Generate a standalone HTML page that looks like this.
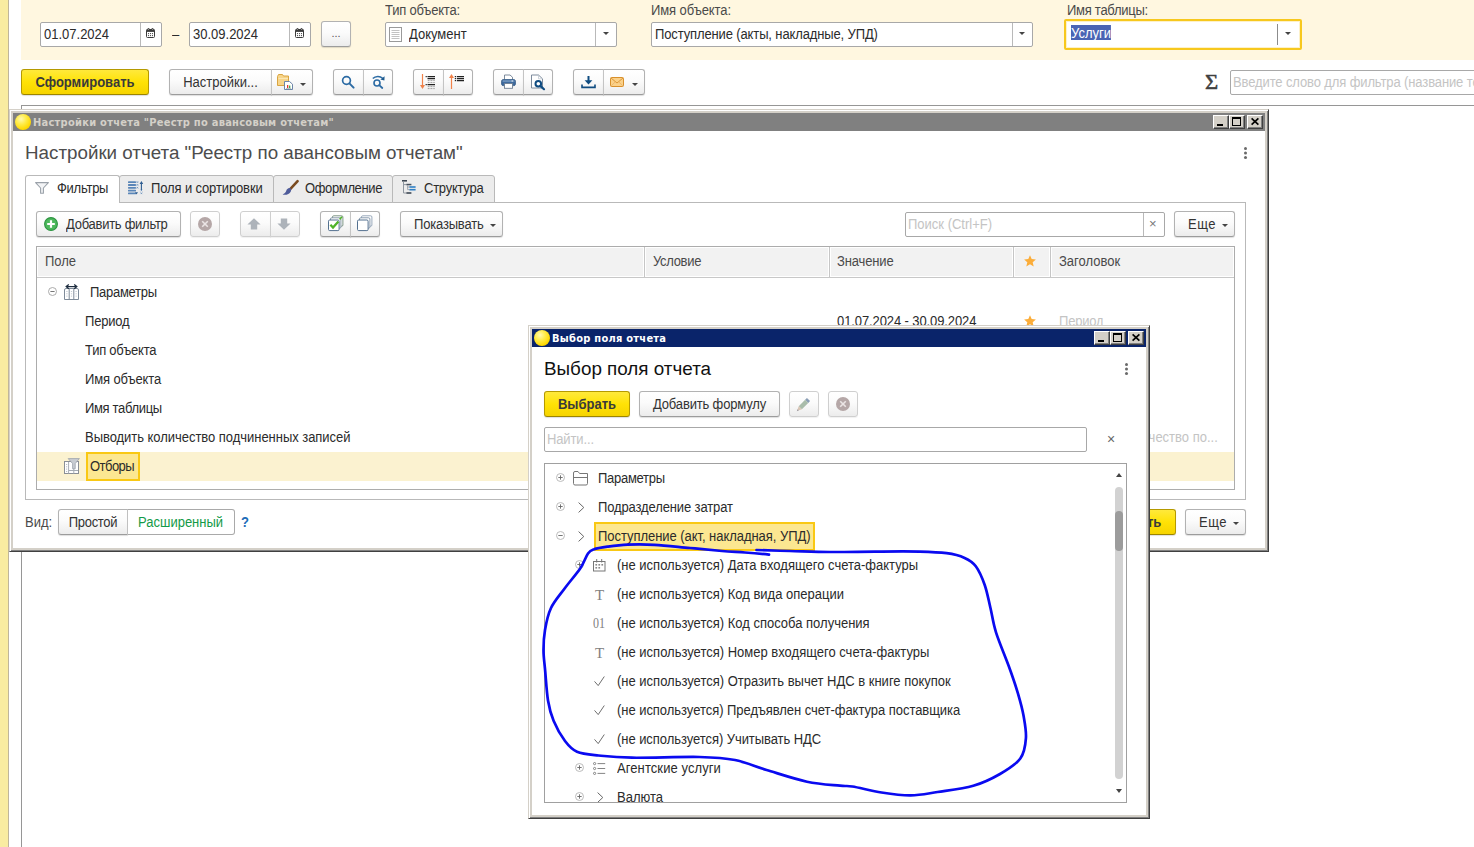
<!DOCTYPE html>
<html lang="ru">
<head>
<meta charset="utf-8">
<title>Настройки отчета</title>
<style>
html,body{margin:0;padding:0;background:#fff}
body{width:1474px;height:847px;overflow:hidden;font-family:"Liberation Sans",sans-serif;font-size:13px;color:#2b2b2b;line-height:1}
#root{position:relative;width:1474px;height:847px;overflow:hidden;background:#fff}
#root *{box-sizing:border-box}
.a{position:absolute}
.t{position:absolute;white-space:nowrap;line-height:16px;height:16px;font-size:14px;transform:scaleX(.9286);transform-origin:0 50%;margin-top:-1px}
.btn{position:absolute;border:1px solid #b2b2b2;border-bottom-color:#9c9c9c;border-radius:3px;background:linear-gradient(#ffffff 0%,#fbfbfb 45%,#ececec 100%);box-shadow:0 1px 1px rgba(0,0,0,.13);text-align:center;white-space:nowrap;color:#333}
.btn.l{border-top-right-radius:0;border-bottom-right-radius:0}
.btn.r{border-top-left-radius:0;border-bottom-left-radius:0;border-left-color:#c4c4c4}
.btn.y{border-color:#b59a00;border-bottom-color:#9c8500;background:linear-gradient(#ffe93c 0%,#ffe206 50%,#f6d400 100%);font-weight:bold;color:#3a3a3a}
.btn span{position:absolute;left:0;right:0;top:50%;margin-top:-8px;line-height:16px;font-size:14px;transform:scaleX(.9286)}
.inp{position:absolute;border:1px solid #a8a8a8;border-radius:2px;background:#fff}
.inp i{position:absolute;top:0;bottom:0;width:1px;background:#b9b9b9}
.car{position:absolute;width:0;height:0;border-left:3.5px solid transparent;border-right:3.5px solid transparent;border-top:3.5px solid #444;margin-top:.5px}
.car.s{border-left-width:3px;border-right-width:3px;border-top-width:3.4px;margin-top:0}
svg{position:absolute;overflow:visible}
.win{position:absolute;background:#fff;border:1px solid;border-color:#d4d0c8 #404040 #404040 #d4d0c8;box-shadow:inset 1px 1px 0 #fff,inset -1px -1px 0 #808080,inset 0 0 0 3px #d4d0c8}
.tb{position:absolute;left:3px;right:3px;top:3px;height:18px}
.tb b{position:absolute;left:20px;top:1px;line-height:17px;font-family:"DejaVu Sans Condensed","DejaVu Sans","Liberation Sans",sans-serif;font-size:11px;letter-spacing:.26px;font-weight:bold;white-space:nowrap}
.ball{position:absolute;left:2px;top:1px;width:16px;height:16px;border-radius:50%;background:radial-gradient(circle at 38% 32%,#fff9b0 0%,#ffec4a 35%,#ffd900 70%,#e9bb00 100%)}
.wb{position:absolute;top:2px;width:16px;height:14px;background:#d4d0c8;border:1px solid;border-color:#fff #404040 #404040 #fff;box-shadow:inset -1px -1px 0 #808080}
.tab{border:1px solid #b9b9b9;border-radius:3px 3px 0 0;background:#ececec}
.tab.on{background:#fff;border-bottom:none;height:28px}
.btn.dis{border-color:#cfcfcf;box-shadow:0 1px 1px rgba(0,0,0,.06)}
.ser{font-family:"Liberation Serif",serif;font-size:15px;color:#808080;transform:none;margin-top:0}
</style>
</head>
<body>
<div id="root">
<!--MAIN-->
<!-- ===== main form ===== -->
<div class="a" style="left:0;top:0;width:8px;height:847px;background:#f9eca1"></div>
<div class="a" style="left:8px;top:0;width:1px;height:847px;background:#bfb59b"></div>
<div class="a" style="left:21px;top:0;width:1453px;height:60px;background:#fff7e0"></div>

<div class="inp" style="left:40px;top:22px;width:122px;height:25px"><i style="left:99px"></i></div>
<div class="t" style="left:44px;top:27px">01.07.2024</div>
<svg style="left:146px;top:28px" width="9" height="10" viewBox="0 0 9 10"><rect x="0.5" y="1.5" width="8" height="8" rx="1" fill="#fff" stroke="#3c3c3c"/><rect x="0.5" y="1.5" width="8" height="2.4" fill="#3c3c3c"/><circle cx="2.5" cy="1" r="1" fill="#3c3c3c"/><circle cx="6.5" cy="1" r="1" fill="#3c3c3c"/><circle cx="2.5" cy="1.3" r=".45" fill="#fff"/><circle cx="6.5" cy="1.3" r=".45" fill="#fff"/><g fill="#3c3c3c"><circle cx="2.5" cy="5.6" r=".6"/><circle cx="4.5" cy="5.6" r=".6"/><circle cx="6.5" cy="5.6" r=".6"/><circle cx="2.5" cy="7.6" r=".6"/><circle cx="4.5" cy="7.6" r=".6"/><circle cx="6.5" cy="7.6" r=".6"/></g></svg>
<div class="t" style="left:172px;top:27px">–</div>
<div class="inp" style="left:189px;top:22px;width:122px;height:25px"><i style="left:99px"></i></div>
<div class="t" style="left:193px;top:27px">30.09.2024</div>
<svg style="left:295px;top:28px" width="9" height="10" viewBox="0 0 9 10"><rect x="0.5" y="1.5" width="8" height="8" rx="1" fill="#fff" stroke="#3c3c3c"/><rect x="0.5" y="1.5" width="8" height="2.4" fill="#3c3c3c"/><circle cx="2.5" cy="1" r="1" fill="#3c3c3c"/><circle cx="6.5" cy="1" r="1" fill="#3c3c3c"/><circle cx="2.5" cy="1.3" r=".45" fill="#fff"/><circle cx="6.5" cy="1.3" r=".45" fill="#fff"/><g fill="#3c3c3c"><circle cx="2.5" cy="5.6" r=".6"/><circle cx="4.5" cy="5.6" r=".6"/><circle cx="6.5" cy="5.6" r=".6"/><circle cx="2.5" cy="7.6" r=".6"/><circle cx="4.5" cy="7.6" r=".6"/><circle cx="6.5" cy="7.6" r=".6"/></g></svg>
<div class="btn" style="left:321px;top:21px;width:30px;height:26px"><span style="font-size:11px;margin-top:-9px;color:#555;transform:none">...</span></div>

<div class="t" style="left:385px;top:3px;color:#4a4a4a;letter-spacing:-0.227px">Тип объекта:</div>
<div class="inp" style="left:385px;top:22px;width:232px;height:25px"><i style="left:209px"></i></div>
<svg style="left:389px;top:27px" width="13" height="15" viewBox="0 0 13 15"><rect x="0.5" y="0.5" width="12" height="14" fill="#fff" stroke="#9a9a9a"/><g stroke="#c2c2c2"><path d="M2.5 3.5h8M2.5 5.5h8M2.5 7.5h8M2.5 9.5h8M2.5 11.5h8"/></g></svg>
<div class="t" style="left:409px;top:27px">Документ</div>
<div class="car s" style="left:602.5px;top:32px"></div>

<div class="t" style="left:651px;top:3px;color:#4a4a4a;letter-spacing:-0.091px">Имя объекта:</div>
<div class="inp" style="left:651px;top:22px;width:382px;height:25px"><i style="left:360px"></i></div>
<div class="t" style="left:655px;top:27px;letter-spacing:-0.136px">Поступление (акты, накладные, УПД)</div>
<div class="car s" style="left:1018.6px;top:32px"></div>

<div class="t" style="left:1067px;top:3px;color:#4a4a4a;letter-spacing:-0.291px">Имя таблицы:</div>
<div class="inp" style="left:1064px;top:19px;width:238px;height:31px;border:2px solid #f7c81e;border-radius:2px;box-shadow:inset 0 0 0 1px #fdf1c9"><i style="left:211px;top:3px;bottom:3px;background:#8c8c8c"></i></div>
<div class="t" style="left:1071px;top:26px;height:15px;line-height:17px;background:#4a64b4;color:#fff">Услуги</div>
<div class="car s" style="left:1285px;top:32px"></div>

<div class="btn y" style="left:21px;top:69px;width:128px;height:26px"><span>Сформировать</span></div>
<div class="btn l" style="left:169px;top:69px;width:103px;height:26px"><span>Настройки...</span></div>
<div class="btn r" style="left:271px;top:69px;width:42px;height:26px"></div>
<div class="btn l" style="left:333px;top:69px;width:31px;height:26px"></div>
<div class="btn r" style="left:363px;top:69px;width:30px;height:26px"></div>
<div class="btn l" style="left:413px;top:69px;width:31px;height:26px"></div>
<div class="btn r" style="left:443px;top:69px;width:30px;height:26px"></div>
<div class="btn l" style="left:493px;top:69px;width:31px;height:26px"></div>
<div class="btn r" style="left:523px;top:69px;width:30px;height:26px"></div>
<div class="btn l" style="left:573px;top:69px;width:31px;height:26px"></div>
<div class="btn r" style="left:603px;top:69px;width:42px;height:26px"></div>
<!--MAINICONS-->
<svg style="left:276px;top:73px" width="18" height="18" viewBox="0 0 18 18"><path d="M1.5 3.5 L2.5 1.5 H6.5 L7.5 3 H12.5 V12.5 H1.5Z" fill="#f7d58a" stroke="#d9a441"/><path d="M2.5 5.5H12" stroke="#fbe7b5"/><path d="M8.5 8.5 H13.5 L16.5 11.2 V16.5 H8.5Z" fill="#fff" stroke="#6d86a8"/><rect x="11" y="12" width="1.3" height="3" fill="#e23b2e"/><rect x="13" y="12.5" width="1.3" height="2.5" fill="#3fae49"/><path d="M10 15.5H15.2" stroke="#9aa" stroke-width=".7"/></svg>
<div class="car" style="left:300px;top:82px;border-left-width:3px;border-right-width:3px;border-top-width:3.5px"></div>
<svg style="left:341px;top:75px" width="14" height="14" viewBox="0 0 14 14"><circle cx="5.5" cy="5.5" r="3.9" fill="none" stroke="#2c6ba4" stroke-width="1.7"/><path d="M8.4 8.4 L12.6 12.6" stroke="#2c6ba4" stroke-width="2" stroke-linecap="round"/></svg>
<svg style="left:371px;top:74px" width="15" height="15" viewBox="0 0 15 15"><circle cx="6" cy="9" r="3" fill="none" stroke="#2c6ba4" stroke-width="1.6"/><path d="M8.2 11.2 L11.3 14" stroke="#2c6ba4" stroke-width="1.8" stroke-linecap="round"/><path d="M1.8 4.6 C4.5 1.8 9 1.8 11.6 4.2" fill="none" stroke="#2c6ba4" stroke-width="1.5"/><path d="M13.6 2.2 L13.4 6.6 L9.4 5.4Z" fill="#1d5a8e"/></svg>
<svg style="left:420px;top:73px" width="17" height="17" viewBox="0 0 17 17"><path d="M2.5 1 V14" stroke="#f0824a" stroke-width="1.2"/><path d="M0 12 L2.5 16 L5 12Z" fill="#f0824a"/><g stroke="#222" stroke-width="1.2"><path d="M7.5 3.6H15M7.5 5.6H15M7.5 11.6H15"/></g><g stroke="#9a9a9a" stroke-width="1"><path d="M9.5 7.6H15M9.5 9.6H15M9.5 13.6H15M9.5 15.6H15" stroke-dasharray="1 .6"/></g><g fill="#222"><rect x="5.6" y="3" width="1.2" height="1.2"/><rect x="5.6" y="11" width="1.2" height="1.2"/></g><g fill="#888"><rect x="7.8" y="7.1" width="1" height="1"/><rect x="7.8" y="9.1" width="1" height="1"/><rect x="7.8" y="13.1" width="1" height="1"/><rect x="7.8" y="15.1" width="1" height="1"/></g></svg>
<svg style="left:449px;top:73px" width="17" height="17" viewBox="0 0 17 17"><path d="M2.5 3 V16" stroke="#f0824a" stroke-width="1.2"/><path d="M0 5 L2.5 1 L5 5Z" fill="#f0824a"/><g stroke="#222" stroke-width="1.2"><path d="M7.8 3.6H15M7.8 5.6H15M7.8 7.6H15"/></g><g fill="#222"><rect x="5.8" y="3" width="1.2" height="1.2"/><rect x="5.8" y="5" width="1.2" height="1.2"/><rect x="5.8" y="7" width="1.2" height="1.2"/></g></svg>
<svg style="left:501px;top:74px" width="15" height="15" viewBox="0 0 15 15"><path d="M3.5 5.5 V1 H9 L11.5 3.2 V5.5" fill="#fff" stroke="#6f7f92" stroke-width=".9"/><rect x="0.6" y="5.6" width="13.8" height="6" rx="1.6" fill="#3f6b9f" stroke="#2f5682" stroke-width=".8"/><rect x="1.6" y="6.4" width="11.8" height="1.3" fill="#7fa1c7"/><rect x="3.5" y="9.5" width="8" height="4.8" fill="#fff" stroke="#6f7f92" stroke-width=".9"/><rect x="10.6" y="6.5" width="1.3" height="1" fill="#fff"/></svg>
<svg style="left:530px;top:74px" width="16" height="16" viewBox="0 0 16 16"><path d="M1.5 1 H8.5 L12.5 4.8 V14 H1.5Z" fill="#fff" stroke="#6f7f92" stroke-width=".9"/><path d="M8.5 1 V4.8 H12.5" fill="none" stroke="#b8c2cc" stroke-width=".7"/><circle cx="8.3" cy="9.8" r="2.8" fill="#fff" stroke="#0f4c81" stroke-width="2"/><path d="M10.6 12.1 L14 15.2" stroke="#0f4c81" stroke-width="2.2" stroke-linecap="round"/></svg>
<svg style="left:581px;top:75px" width="15" height="14" viewBox="0 0 15 14"><path d="M7.5 1 V8" stroke="#0f4c81" stroke-width="2"/><path d="M3.6 5.2 H11.4 L7.5 9.6Z" fill="#0f4c81"/><path d="M1 9.6 V12.4 H14 V9.6" fill="none" stroke="#0f4c81" stroke-width="1.6"/></svg>
<svg style="left:610px;top:77px" width="14" height="10" viewBox="0 0 14 10"><rect x="0.5" y="0.5" width="13" height="9" rx="1" fill="#fbd189" stroke="#d8902c"/><path d="M1 1 L7 6 L13 1" fill="none" stroke="#d8902c" stroke-width=".9"/><path d="M1 9 L5.3 4.8 M13 9 L8.7 4.8" stroke="#e8b266" stroke-width=".8"/></svg>
<div class="car" style="left:632px;top:82px;border-left-width:3px;border-right-width:3px;border-top-width:3.5px"></div>
<div class="t" style="left:1205px;top:71px;font-family:'Liberation Serif',serif;font-size:21px;line-height:22px;height:22px;color:#404040;-webkit-text-stroke:.5px #404040;transform:scaleX(1.08);transform-origin:0 0;margin-top:0">Σ</div>
<div class="inp" style="left:1230px;top:70px;width:260px;height:25px"></div>
<div class="t" style="left:1233px;top:75px;color:#c4c4c4;letter-spacing:-0.126px">Введите слово для фильтра (название товара)</div>

<div class="a" style="left:21px;top:105px;width:1453px;height:1px;background:#969696"></div>
<div class="a" style="left:21px;top:105px;width:1px;height:742px;background:#969696"></div>
<!--OUTER-->
<!-- ===== outer window: report settings ===== -->
<div class="win" style="left:9px;top:109px;width:1260px;height:443px">
 <div class="tb" style="background:#808080"><div class="ball"></div><b style="color:#d4d0c8">Настройки отчета "Реестр по авансовым отчетам"</b>
  <div class="wb" style="right:36px"><svg width="16" height="14" style="left:-1px;top:-1px" shape-rendering="crispEdges"><rect x="4" y="9" width="6" height="2" fill="#000"/></svg></div><div class="wb" style="right:20px"><svg width="16" height="14" style="left:-1px;top:-1px" shape-rendering="crispEdges"><path d="M3 2h9v9h-9z M4 4v6h7v-6z" fill="#000" fill-rule="evenodd"/></svg></div><div class="wb" style="right:2px"><svg width="16" height="14" style="left:-1px;top:-1px"><path d="M4.6 3.4 L11.4 9.6 M11.4 3.4 L4.6 9.6" stroke="#000" stroke-width="1.7" shape-rendering="geometricPrecision"/></svg></div>
 </div>
</div>
<div class="t" style="left:25px;top:142px;font-size:18.8px;line-height:22px;height:22px;color:#4d4d4d;transform:none;margin-top:0">Настройки отчета "Реестр по авансовым отчетам"</div>
<div class="a" style="left:1244px;top:147px;width:3px;height:3px;border-radius:50%;background:#6a6a6a;box-shadow:0 4.5px 0 #6a6a6a,0 9px 0 #6a6a6a"></div>

<!-- tabs -->
<div class="a" style="left:25px;top:202px;width:1221px;height:298px;border:1px solid #b9b9b9"></div>
<div class="a tab" style="left:119px;top:175px;width:155px;height:28px"></div>
<div class="a tab" style="left:273px;top:175px;width:120px;height:28px"></div>
<div class="a tab" style="left:392px;top:175px;width:103px;height:28px"></div>
<div class="a tab on" style="left:25px;top:175px;width:95px;height:28px"></div>
<div class="t" style="left:57px;top:181px;letter-spacing:-0.283px">Фильтры</div>
<div class="t" style="left:151px;top:181px;letter-spacing:-0.138px">Поля и сортировки</div>
<div class="t" style="left:305px;top:181px;letter-spacing:-0.389px">Оформление</div>
<div class="t" style="left:424px;top:181px;letter-spacing:-0.275px">Структура</div>
<!--TABICONS-->
<svg style="left:35px;top:182px" width="14" height="12" viewBox="0 0 14 12"><path d="M0.6 0.6 H13.4 L8.4 6 V11.2 H5.6 V6Z" fill="#f3f4f6" stroke="#9aa1a9" stroke-width="1.1" stroke-linejoin="round"/></svg>
<svg style="left:128px;top:181px" width="16" height="14" viewBox="0 0 16 14"><g fill="#5a86b8"><rect x="0" y="0.3" width="8" height="1.8" rx=".6"/><rect x="0" y="3.1" width="8" height="1.8" rx=".6"/><rect x="0" y="5.9" width="8" height="1.8" rx=".6"/><rect x="0" y="8.7" width="8" height="1.8" rx=".6"/><rect x="0" y="11.5" width="8" height="1.8" rx=".6"/></g><path d="M7 11.2 L10 11.2 L8.5 13.6Z" fill="#2d5d91"/><g stroke="#5a86b8" stroke-width=".7"><path d="M8.6 .3l1.6 1.6m0-1.6l-1.6 1.6M8.6 3.1l1.6 1.6m0-1.6l-1.6 1.6M8.6 5.9l1.6 1.6m0-1.6l-1.6 1.6"/><path d="M12.6 8.7l1.6 1.6m0-1.6l-1.6 1.6M12.6 11.5l1.6 1.6m0-1.6l-1.6 1.6"/></g><path d="M13.4 2 V9" stroke="#2d5d91" stroke-width="1.1"/><path d="M11.6 3 L13.4 0 L15.2 3Z" fill="#2d5d91"/></svg>
<svg style="left:282px;top:180px" width="17" height="16" viewBox="0 0 17 16"><path d="M15.6 1.2 L8.2 9.2" stroke="#7a4a1e" stroke-width="2.6" stroke-linecap="round"/><path d="M8.6 8.2 C6.5 7.4 4.6 9 4.2 11 C3.8 12.6 2.4 13.6 0.6 14.6 C4 15.4 7.6 14 8.8 11.4 C9.3 10.2 9.4 9 8.6 8.2Z" fill="#4e5b9a"/></svg>
<svg style="left:402px;top:180px" width="14" height="14" viewBox="0 0 14 14"><rect x="0" y="0" width="5" height="1.6" fill="#3c4652"/><path d="M1.5 1.6 V13 H4.5 M1.5 4.6 H4.5" fill="none" stroke="#8e969f" stroke-width="1"/><rect x="4.4" y="3.8" width="5" height="1.5" fill="#46515e"/><path d="M5.6 5.3 V9.6 M5.6 7 H7.4 M5.6 9.6 H7.4" fill="none" stroke="#8e969f" stroke-width=".8"/><rect x="7.4" y="6.2" width="6.2" height="1.6" fill="#2f7fc4"/><rect x="7.4" y="8.9" width="6.2" height="1.6" fill="#2f7fc4"/><rect x="4.4" y="12.2" width="5" height="1.6" fill="#3c4652"/></svg>

<!-- toolbar -->
<div class="btn" style="left:36px;top:211px;width:145px;height:26px"></div>
<div class="t" style="left:66px;top:217px;color:#333;letter-spacing:-0.286px">Добавить фильтр</div>
<div class="btn dis" style="left:190px;top:211px;width:30px;height:26px"></div>
<div class="btn l dis" style="left:240px;top:211px;width:31px;height:26px"></div>
<div class="btn r dis" style="left:270px;top:211px;width:30px;height:26px"></div>
<div class="btn l" style="left:320px;top:211px;width:31px;height:26px"></div>
<div class="btn r" style="left:350px;top:211px;width:30px;height:26px"></div>
<div class="btn" style="left:400px;top:211px;width:103px;height:26px"></div>
<div class="t" style="left:414px;top:217px;color:#333;letter-spacing:-.2px">Показывать</div>
<div class="car" style="left:490px;top:223px"></div>
<div class="inp" style="left:905px;top:212px;width:260px;height:25px"><i style="left:237px"></i></div>
<div class="t" style="left:908px;top:217px;color:#c4c4c4">Поиск (Ctrl+F)</div>
<div class="t" style="left:1149px;top:216px;color:#777;font-size:13px;transform:none;margin-top:0">×</div>
<div class="btn" style="left:1174px;top:211px;width:61px;height:26px"></div>
<div class="t" style="left:1188px;top:217px;color:#333;letter-spacing:.5px">Еще</div>
<div class="car" style="left:1222px;top:223px"></div>
<!--TBICONS-->
<svg style="left:44px;top:217px" width="14" height="14" viewBox="0 0 14 14"><circle cx="7" cy="7" r="6.4" fill="#4db85c" stroke="#2c9440" stroke-width="1.1"/><path d="M7 3.2 V10.8 M3.2 7 H10.8" stroke="#fff" stroke-width="2.2"/></svg>
<svg style="left:198px;top:217px" width="14" height="14" viewBox="0 0 14 14"><circle cx="7" cy="7" r="7" fill="#b5a7a7"/><path d="M4.2 4.2 L9.8 9.8 M9.8 4.2 L4.2 9.8" stroke="#ebe5e5" stroke-width="1.6"/></svg>
<svg style="left:247px;top:218px" width="14" height="12" viewBox="0 0 14 12"><path d="M7 0.3 L13.6 6.6 H10.2 V11.6 H3.8 V6.6 H0.4Z" fill="#adb3ba"/></svg>
<svg style="left:277px;top:218px" width="14" height="12" viewBox="0 0 14 12"><path d="M7 11.7 L13.6 5.4 H10.2 V0.4 H3.8 V5.4 H0.4Z" fill="#adb3ba"/></svg>
<svg style="left:328px;top:215px" width="16" height="17" viewBox="0 0 16 17"><rect x="4.5" y="0.8" width="10.4" height="10.4" rx="1.2" fill="#fff" stroke="#6f8a78" stroke-width=".9"/><rect x="2.5" y="2.8" width="10.4" height="10.4" rx="1.2" fill="#fff" stroke="#7a8ea0" stroke-width=".9"/><rect x="0.5" y="5" width="10.6" height="10.6" rx="1.2" fill="#fff" stroke="#53708f" stroke-width="1"/><path d="M2.4 9.8 L5 12.6 L10.4 6.6" fill="none" stroke="#4fb32a" stroke-width="2.3"/><path d="M11.6 4.4 L14 1.8" stroke="#4fb32a" stroke-width="1.6"/></svg>
<svg style="left:357px;top:215px" width="16" height="17" viewBox="0 0 16 17"><rect x="4.5" y="0.8" width="10.4" height="10.4" rx="1.2" fill="#fff" stroke="#8d9fb3" stroke-width=".9"/><rect x="2.5" y="2.8" width="10.4" height="10.4" rx="1.2" fill="#fff" stroke="#7a8ea5" stroke-width=".9"/><rect x="0.5" y="5" width="10.6" height="10.6" rx="1.2" fill="#fff" stroke="#53708f" stroke-width="1"/></svg>

<!-- table -->
<div class="a" style="left:36px;top:246px;width:1199px;height:244px;border:1px solid #acacac;background:#fff"></div>
<div class="a" style="left:38px;top:248px;width:605px;height:28px;background:#f2f2f2"></div>
<div class="a" style="left:646px;top:248px;width:182px;height:28px;background:#f2f2f2"></div>
<div class="a" style="left:831px;top:248px;width:181px;height:28px;background:#f2f2f2"></div>
<div class="a" style="left:1015px;top:248px;width:34px;height:28px;background:#f2f2f2"></div>
<div class="a" style="left:1052px;top:248px;width:181px;height:28px;background:#f2f2f2"></div>
<div class="a" style="left:644px;top:247px;width:1px;height:30px;background:#c6c6c6"></div>
<div class="a" style="left:829px;top:247px;width:1px;height:30px;background:#c6c6c6"></div>
<div class="a" style="left:1013px;top:247px;width:1px;height:30px;background:#c6c6c6"></div>
<div class="a" style="left:1050px;top:247px;width:1px;height:30px;background:#c6c6c6"></div>
<div class="a" style="left:37px;top:277px;width:1197px;height:1px;background:#c8c8c8"></div>
<div class="t" style="left:45px;top:254px;color:#4a4a4a">Поле</div>
<div class="t" style="left:653px;top:254px;color:#4a4a4a;letter-spacing:-0.333px">Условие</div>
<div class="t" style="left:837px;top:254px;color:#4a4a4a;letter-spacing:-0.143px">Значение</div>
<div class="t" style="left:1059px;top:254px;color:#4a4a4a">Заголовок</div>
<div class="a" style="left:37px;top:452px;width:1197px;height:29px;background:#fbf2d0"></div>
<div class="a" style="left:86px;top:452px;width:54px;height:29px;background:#fce791;border:2px solid #f9c814"></div>
<div class="t" style="left:90px;top:285px;letter-spacing:-0.300px">Параметры</div>
<div class="t" style="left:85px;top:314px;letter-spacing:-0.200px">Период</div>
<div class="t" style="left:85px;top:343px;letter-spacing:-0.250px">Тип объекта</div>
<div class="t" style="left:85px;top:372px;letter-spacing:-0.140px">Имя объекта</div>
<div class="t" style="left:85px;top:401px;letter-spacing:-0.360px">Имя таблицы</div>
<div class="t" style="left:85px;top:430px;letter-spacing:-.04px">Выводить количество подчиненных записей</div>
<div class="t" style="left:90px;top:459px;letter-spacing:-0.580px">Отборы</div>
<div class="t" style="left:837px;top:314px;letter-spacing:-0.109px">01.07.2024 - 30.09.2024</div>
<div class="t" style="left:1059px;top:314px;color:#c4c4c4;letter-spacing:-0.200px">Период</div>
<div class="t" style="left:1100px;top:430px;width:118px;overflow:hidden;color:#c4c4c4;direction:rtl;text-align:right;transform-origin:100% 50%"><span style="direction:ltr;unicode-bidi:bidi-override">Выводить количество по...</span></div>
<!--TREEICONS-->
<svg style="left:48px;top:287px" width="9" height="9" viewBox="0 0 9 9"><circle cx="4.5" cy="4.5" r="4" fill="#fff" stroke="#a2a2a2" stroke-width=".9"/><path d="M2.4 4.5 H6.6" stroke="#777" stroke-width="1"/></svg>
<svg style="left:64px;top:284px" width="15" height="16" viewBox="0 0 15 16"><path d="M0.5 6 Q0.5 4.5 2 4.5 H13 Q14.5 4.5 14.5 6 V15.5 H0.5Z" fill="#fff" stroke="#7f8b99"/><path d="M5.2 5 V15.5 M9.8 5 V15.5" stroke="#7f8b99"/><g fill="#c3c9d0"><rect x="2.3" y="7" width="1.2" height="1"/><rect x="2.3" y="9.3" width="1.2" height="1"/><rect x="2.3" y="11.6" width="1.2" height="1"/><rect x="6.9" y="7" width="1.2" height="1"/><rect x="6.9" y="9.3" width="1.2" height="1"/><rect x="6.9" y="11.6" width="1.2" height="1"/><rect x="11.5" y="7" width="1.2" height="1"/><rect x="11.5" y="9.3" width="1.2" height="1"/><rect x="11.5" y="11.6" width="1.2" height="1"/></g><path d="M2.6 2.6 H12.4" stroke="#1f2e40" stroke-width="1.2"/><path d="M4.8 0.4 L2.2 2.6 L4.8 4.8 M10.2 0.4 L12.8 2.6 L10.2 4.8" fill="none" stroke="#1f2e40" stroke-width="1.3"/></svg>
<svg style="left:64px;top:458px" width="16" height="16" viewBox="0 0 16 16"><rect x="0.5" y="3.5" width="14" height="12" fill="#fff" stroke="#8a8f96"/><path d="M4.6 4 V15.5 M9.8 9 V15.5 M5 12.5 H14" stroke="#a7adb4"/><g fill="#b9bfc6"><rect x="2" y="6" width="1.2" height="1"/><rect x="2" y="8.3" width="1.2" height="1"/><rect x="2" y="10.6" width="1.2" height="1"/><rect x="2" y="13" width="1.2" height="1"/></g><path d="M4.2 0.6 H15.4 L11.2 5.6 V10.8 H8.6 V5.6Z" fill="#c9cdd2" stroke="#9aa1a9" stroke-width=".8" stroke-linejoin="round"/></svg>
<svg style="left:1024px;top:255px" width="12" height="12" viewBox="0 0 12 12"><path d="M6 0.2 L7.7 4.1 L11.9 4.5 L8.7 7.3 L9.7 11.4 L6 9.2 L2.3 11.4 L3.3 7.3 L0.1 4.5 L4.3 4.1Z" fill="#fbad3a"/></svg>
<svg style="left:1024px;top:315px" width="12" height="12" viewBox="0 0 12 12"><path d="M6 0.2 L7.7 4.1 L11.9 4.5 L8.7 7.3 L9.7 11.4 L6 9.2 L2.3 11.4 L3.3 7.3 L0.1 4.5 L4.3 4.1Z" fill="#fbad3a"/></svg>

<!-- bottom -->
<div class="t" style="left:25px;top:515px;color:#4a4a4a">Вид:</div>
<div class="btn l" style="left:58px;top:509px;width:70px;height:26px"><span style="letter-spacing:-0.317px">Простой</span></div>
<div class="a" style="left:127px;top:509px;width:108px;height:26px;border:1px solid #a9a9a9;border-left-color:#c0c0c0;border-radius:0 3px 3px 0;background:#fff"></div>
<div class="t" style="left:138px;top:515px;color:#149a48">Расширенный</div>
<div class="t" style="left:241px;top:515px;color:#1d6cb8;font-weight:bold;-webkit-text-stroke:0">?</div>
<div class="btn y" style="left:1076px;top:509px;width:100px;height:26px"></div>
<div class="t" style="left:1147px;top:515px;font-weight:bold;color:#3a3a3a">ть</div>
<div class="btn" style="left:1185px;top:509px;width:61px;height:26px"></div>
<div class="t" style="left:1199px;top:515px;color:#333;letter-spacing:.5px">Еще</div>
<div class="car" style="left:1233px;top:521px"></div>
<!--INNER-->
<!-- ===== inner window: field chooser ===== -->
<div class="win" style="left:528px;top:325px;width:622px;height:494px">
 <div class="tb" style="background:#0a246a"><div class="ball"></div><b style="color:#fff">Выбор поля отчета</b>
  <div class="wb" style="right:36px"><svg width="16" height="14" style="left:-1px;top:-1px" shape-rendering="crispEdges"><rect x="4" y="9" width="6" height="2" fill="#000"/></svg></div><div class="wb" style="right:20px"><svg width="16" height="14" style="left:-1px;top:-1px" shape-rendering="crispEdges"><path d="M3 2h9v9h-9z M4 4v6h7v-6z" fill="#000" fill-rule="evenodd"/></svg></div><div class="wb" style="right:2px"><svg width="16" height="14" style="left:-1px;top:-1px"><path d="M4.6 3.4 L11.4 9.6 M11.4 3.4 L4.6 9.6" stroke="#000" stroke-width="1.7" shape-rendering="geometricPrecision"/></svg></div>
 </div>
</div>
<div class="t" style="left:544px;top:358px;font-size:18.85px;line-height:22px;height:22px;color:#111;transform:none;margin-top:0">Выбор поля отчета</div>
<div class="a" style="left:1125px;top:363px;width:3px;height:3px;border-radius:50%;background:#6a6a6a;box-shadow:0 4.5px 0 #6a6a6a,0 9px 0 #6a6a6a"></div>
<div class="btn y" style="left:544px;top:391px;width:86px;height:26px"><span>Выбрать</span></div>
<div class="btn" style="left:639px;top:391px;width:141px;height:26px"><span style="letter-spacing:-0.173px">Добавить формулу</span></div>
<div class="btn dis" style="left:789px;top:391px;width:30px;height:26px"></div>
<div class="btn dis" style="left:828px;top:391px;width:30px;height:26px"></div>
<!--INICONS-->
<svg style="left:795px;top:398px" width="15" height="15" viewBox="0 0 15 15"><g transform="rotate(45 7.5 7.5)"><rect x="5.3" y="-1" width="4.4" height="2.6" fill="#8a9db5"/><rect x="5.3" y="1.6" width="4.4" height="9" fill="#a9bcaa"/><path d="M5.3 10.6 H9.7 L7.5 15.4Z" fill="#d8c5b5"/><path d="M6.7 13.6 H8.3 L7.5 15.6Z" fill="#9a9aa2"/></g></svg>
<svg style="left:836px;top:397px" width="14" height="14" viewBox="0 0 14 14"><circle cx="7" cy="7" r="7" fill="#b5a7a7"/><path d="M4.2 4.2 L9.8 9.8 M9.8 4.2 L4.2 9.8" stroke="#ebe5e5" stroke-width="1.6"/></svg>
<div class="inp" style="left:544px;top:427px;width:543px;height:25px"></div>
<div class="t" style="left:547px;top:432px;color:#c4c4c4;letter-spacing:-0.143px">Найти...</div>
<div class="t" style="left:1107px;top:431px;color:#666;font-size:14px;transform:none;margin-top:0">×</div>

<div class="a" style="left:544px;top:463px;width:583px;height:340px;border:1px solid #a0a0a0;background:#fff;overflow:hidden">
 <div class="a" style="left:49px;top:58px;width:221px;height:29px;background:#fce791;border:2px solid #f9c814"></div>
 <div class="t" style="left:53px;top:7px;letter-spacing:-0.300px">Параметры</div>
 <div class="t" style="left:53px;top:36px;letter-spacing:-0.137px">Подразделение затрат</div>
 <div class="t" style="left:53px;top:65px;letter-spacing:-0.050px">Поступление (акт, накладная, УПД)</div>
 <div class="t" style="left:72px;top:94px">(не используется) Дата входящего счета-фактуры</div>
 <div class="t" style="left:72px;top:123px">(не используется) Код вида операции</div>
 <div class="t" style="left:72px;top:152px">(не используется) Код способа получения</div>
 <div class="t" style="left:72px;top:181px">(не используется) Номер входящего счета-фактуры</div>
 <div class="t" style="left:72px;top:210px">(не используется) Отразить вычет НДС в книге покупок</div>
 <div class="t" style="left:72px;top:239px;letter-spacing:-.043px">(не используется) Предъявлен счет-фактура поставщика</div>
 <div class="t" style="left:72px;top:268px;letter-spacing:-0.060px">(не используется) Учитывать НДС</div>
 <div class="t" style="left:72px;top:297px;letter-spacing:0.093px">Агентские услуги</div>
 <div class="t" style="left:72px;top:326px">Валюта</div>
 <div class="t ser" style="left:50px;top:123px">T</div>
 <div class="t ser" style="left:48px;top:151px;transform:scaleX(.8);transform-origin:0 0">01</div>
 <div class="t ser" style="left:50px;top:181px">T</div>
 <!--INTREEICONS-->
 <svg style="left:11px;top:9px" width="9" height="9" viewBox="0 0 9 9"><circle cx="4.5" cy="4.5" r="4" fill="#fff" stroke="#b4b4b4" stroke-width=".9"/><path d="M2.3 4.5 H6.7 M4.5 2.3 V6.7" stroke="#666" stroke-width=".9"/></svg>
 <svg style="left:11px;top:38px" width="9" height="9" viewBox="0 0 9 9"><circle cx="4.5" cy="4.5" r="4" fill="#fff" stroke="#b4b4b4" stroke-width=".9"/><path d="M2.3 4.5 H6.7 M4.5 2.3 V6.7" stroke="#666" stroke-width=".9"/></svg>
 <svg style="left:11px;top:67px" width="9" height="9" viewBox="0 0 9 9"><circle cx="4.5" cy="4.5" r="4" fill="#fff" stroke="#b4b4b4" stroke-width=".9"/><path d="M2.3 4.5 H6.7" stroke="#666" stroke-width=".9"/></svg>
 <svg style="left:30px;top:96px" width="9" height="9" viewBox="0 0 9 9"><circle cx="4.5" cy="4.5" r="4" fill="#fff" stroke="#b4b4b4" stroke-width=".9"/><path d="M2.3 4.5 H6.7 M4.5 2.3 V6.7" stroke="#666" stroke-width=".9"/></svg>
 <svg style="left:30px;top:299px" width="9" height="9" viewBox="0 0 9 9"><circle cx="4.5" cy="4.5" r="4" fill="#fff" stroke="#b4b4b4" stroke-width=".9"/><path d="M2.3 4.5 H6.7 M4.5 2.3 V6.7" stroke="#666" stroke-width=".9"/></svg>
 <svg style="left:30px;top:328px" width="9" height="9" viewBox="0 0 9 9"><circle cx="4.5" cy="4.5" r="4" fill="#fff" stroke="#b4b4b4" stroke-width=".9"/><path d="M2.3 4.5 H6.7 M4.5 2.3 V6.7" stroke="#666" stroke-width=".9"/></svg>
 <svg style="left:28px;top:7px" width="15" height="15" viewBox="0 0 15 15"><path d="M0.5 2 Q0.5 0.5 2 0.5 H5 L6.6 2.5 H14.5 V12.5 Q14.5 14 13 14 H2 Q0.5 14 0.5 12.5Z M0.5 6.5 H14.5" fill="none" stroke="#777" stroke-width="1"/></svg>
 <svg style="left:33px;top:38px" width="7" height="11" viewBox="0 0 7 11"><path d="M0.6 0.6 L5.8 5.5 L0.6 10.4" fill="none" stroke="#666" stroke-width="1"/></svg>
 <svg style="left:33px;top:67px" width="7" height="11" viewBox="0 0 7 11"><path d="M0.6 0.6 L5.8 5.5 L0.6 10.4" fill="none" stroke="#666" stroke-width="1"/></svg>
 <svg style="left:52px;top:328px" width="7" height="11" viewBox="0 0 7 11"><path d="M0.6 0.6 L5.8 5.5 L0.6 10.4" fill="none" stroke="#666" stroke-width="1"/></svg>
 <svg style="left:48px;top:95px" width="13" height="13" viewBox="0 0 13 13"><rect x="0.5" y="2.5" width="11.5" height="9.5" fill="none" stroke="#777"/><path d="M3.7 0 V3.5 M8.7 0 V3.5" stroke="#777" stroke-width="1"/><g fill="#888"><rect x="2.4" y="5" width="1.7" height="1.6"/><rect x="5.4" y="5" width="1.7" height="1.6"/><rect x="8.4" y="5" width="1.7" height="1.6"/><rect x="2.4" y="8" width="1.7" height="1.6"/><rect x="5.4" y="8" width="1.7" height="1.6"/></g></svg>
 <svg style="left:49px;top:212px" width="12" height="11" viewBox="0 0 12 11"><path d="M0.5 5.4 L4.2 9.6 L10.3 0.5" fill="none" stroke="#6e6e6e" stroke-width="1"/></svg>
 <svg style="left:49px;top:241px" width="12" height="11" viewBox="0 0 12 11"><path d="M0.5 5.4 L4.2 9.6 L10.3 0.5" fill="none" stroke="#6e6e6e" stroke-width="1"/></svg>
 <svg style="left:49px;top:270px" width="12" height="11" viewBox="0 0 12 11"><path d="M0.5 5.4 L4.2 9.6 L10.3 0.5" fill="none" stroke="#6e6e6e" stroke-width="1"/></svg>
 <svg style="left:48px;top:298px" width="13" height="13" viewBox="0 0 13 13"><g fill="none" stroke="#777" stroke-width=".9"><circle cx="1.6" cy="1.6" r="1.1"/><circle cx="1.6" cy="6.5" r="1.1"/><circle cx="1.6" cy="11.4" r="1.1"/><path d="M4.5 1.6 H12.2 M4.5 6.5 H12.2 M4.5 11.4 H12.2"/></g></svg>
 <div class="a" style="left:570px;top:23px;width:8px;height:292px;border-radius:4px;background:#d2d2d2"></div>
 <div class="a" style="left:570px;top:47px;width:8px;height:40px;border-radius:4px;background:#9c9c9c"></div>
 <div class="a" style="left:571px;top:9px;width:0;height:0;border-left:3px solid transparent;border-right:3px solid transparent;border-bottom:4px solid #444"></div>
 <div class="a" style="left:571px;top:325px;width:0;height:0;border-left:3px solid transparent;border-right:3px solid transparent;border-top:4px solid #444"></div>
</div>
<svg style="left:0;top:0" width="1474" height="847" viewBox="0 0 1474 847"><path d="M769.0 554.6 C765.0 554.2 752.8 553.1 745.0 552.5 C737.2 551.9 731.2 551.8 722.0 551.0 C712.8 550.2 701.2 549.0 690.0 548.0 C678.8 547.0 664.9 545.4 654.5 544.8 C644.1 544.2 635.4 544.3 627.6 544.6 C619.9 544.9 613.6 545.8 608.0 546.6 C602.4 547.4 597.3 548.1 594.0 549.3 C590.7 550.4 590.2 550.4 588.0 553.5 C585.8 556.6 584.3 562.2 580.5 568.0 C576.7 573.8 569.9 581.3 565.0 588.0 C560.1 594.7 554.3 601.0 551.0 608.0 C547.7 615.0 546.2 623.0 545.0 630.0 C543.8 637.0 543.5 643.5 543.5 650.0 C543.5 656.5 544.2 660.6 545.0 669.0 C545.8 677.4 546.6 691.9 548.0 700.5 C549.4 709.1 550.8 714.0 553.6 720.7 C556.4 727.5 561.1 735.8 565.0 741.0 C568.9 746.2 571.4 749.3 577.0 751.7 C582.6 754.1 589.3 754.5 598.5 755.5 C607.7 756.5 615.2 757.5 632.0 757.7 C648.8 758.0 682.2 756.6 699.4 757.0 C716.6 757.4 723.8 757.8 735.0 760.0 C746.2 762.2 754.6 766.4 766.6 770.0 C778.6 773.6 794.8 779.1 807.0 781.7 C819.2 784.3 832.4 784.9 840.0 785.7 C847.6 786.5 845.5 785.4 852.4 786.5 C859.3 787.6 871.8 791.0 881.5 792.5 C891.2 794.0 901.3 795.5 910.6 795.4 C919.9 795.3 927.0 793.6 937.5 792.0 C948.0 790.4 962.9 788.8 973.3 785.8 C983.7 782.8 992.2 778.5 1000.0 774.0 C1007.8 769.5 1016.0 764.4 1020.3 758.5 C1024.6 752.6 1025.4 745.5 1025.9 738.4 C1026.5 731.3 1024.9 723.5 1023.6 716.0 C1022.3 708.5 1020.4 701.8 1018.0 693.6 C1015.6 685.4 1012.7 676.9 1009.0 666.7 C1005.3 656.5 999.1 642.1 996.0 632.3 C992.9 622.5 992.3 615.6 990.4 607.7 C988.5 599.9 987.2 592.1 984.8 585.2 C982.4 578.3 979.2 570.8 975.8 566.2 C972.4 561.7 969.5 560.1 964.6 557.9 C959.7 555.7 954.1 554.2 946.6 553.2 C939.1 552.2 931.7 551.9 919.7 551.6 C907.8 551.3 889.9 551.5 874.9 551.6 C859.9 551.7 844.1 552.1 830.0 552.0 C815.9 551.9 802.2 551.3 790.0 551.0 C777.8 550.7 762.1 550.2 756.5 550.0" fill="none" stroke="#0a0af0" stroke-width="2.7" stroke-linecap="round" stroke-linejoin="round"/></svg>
</div>
</body>
</html>
